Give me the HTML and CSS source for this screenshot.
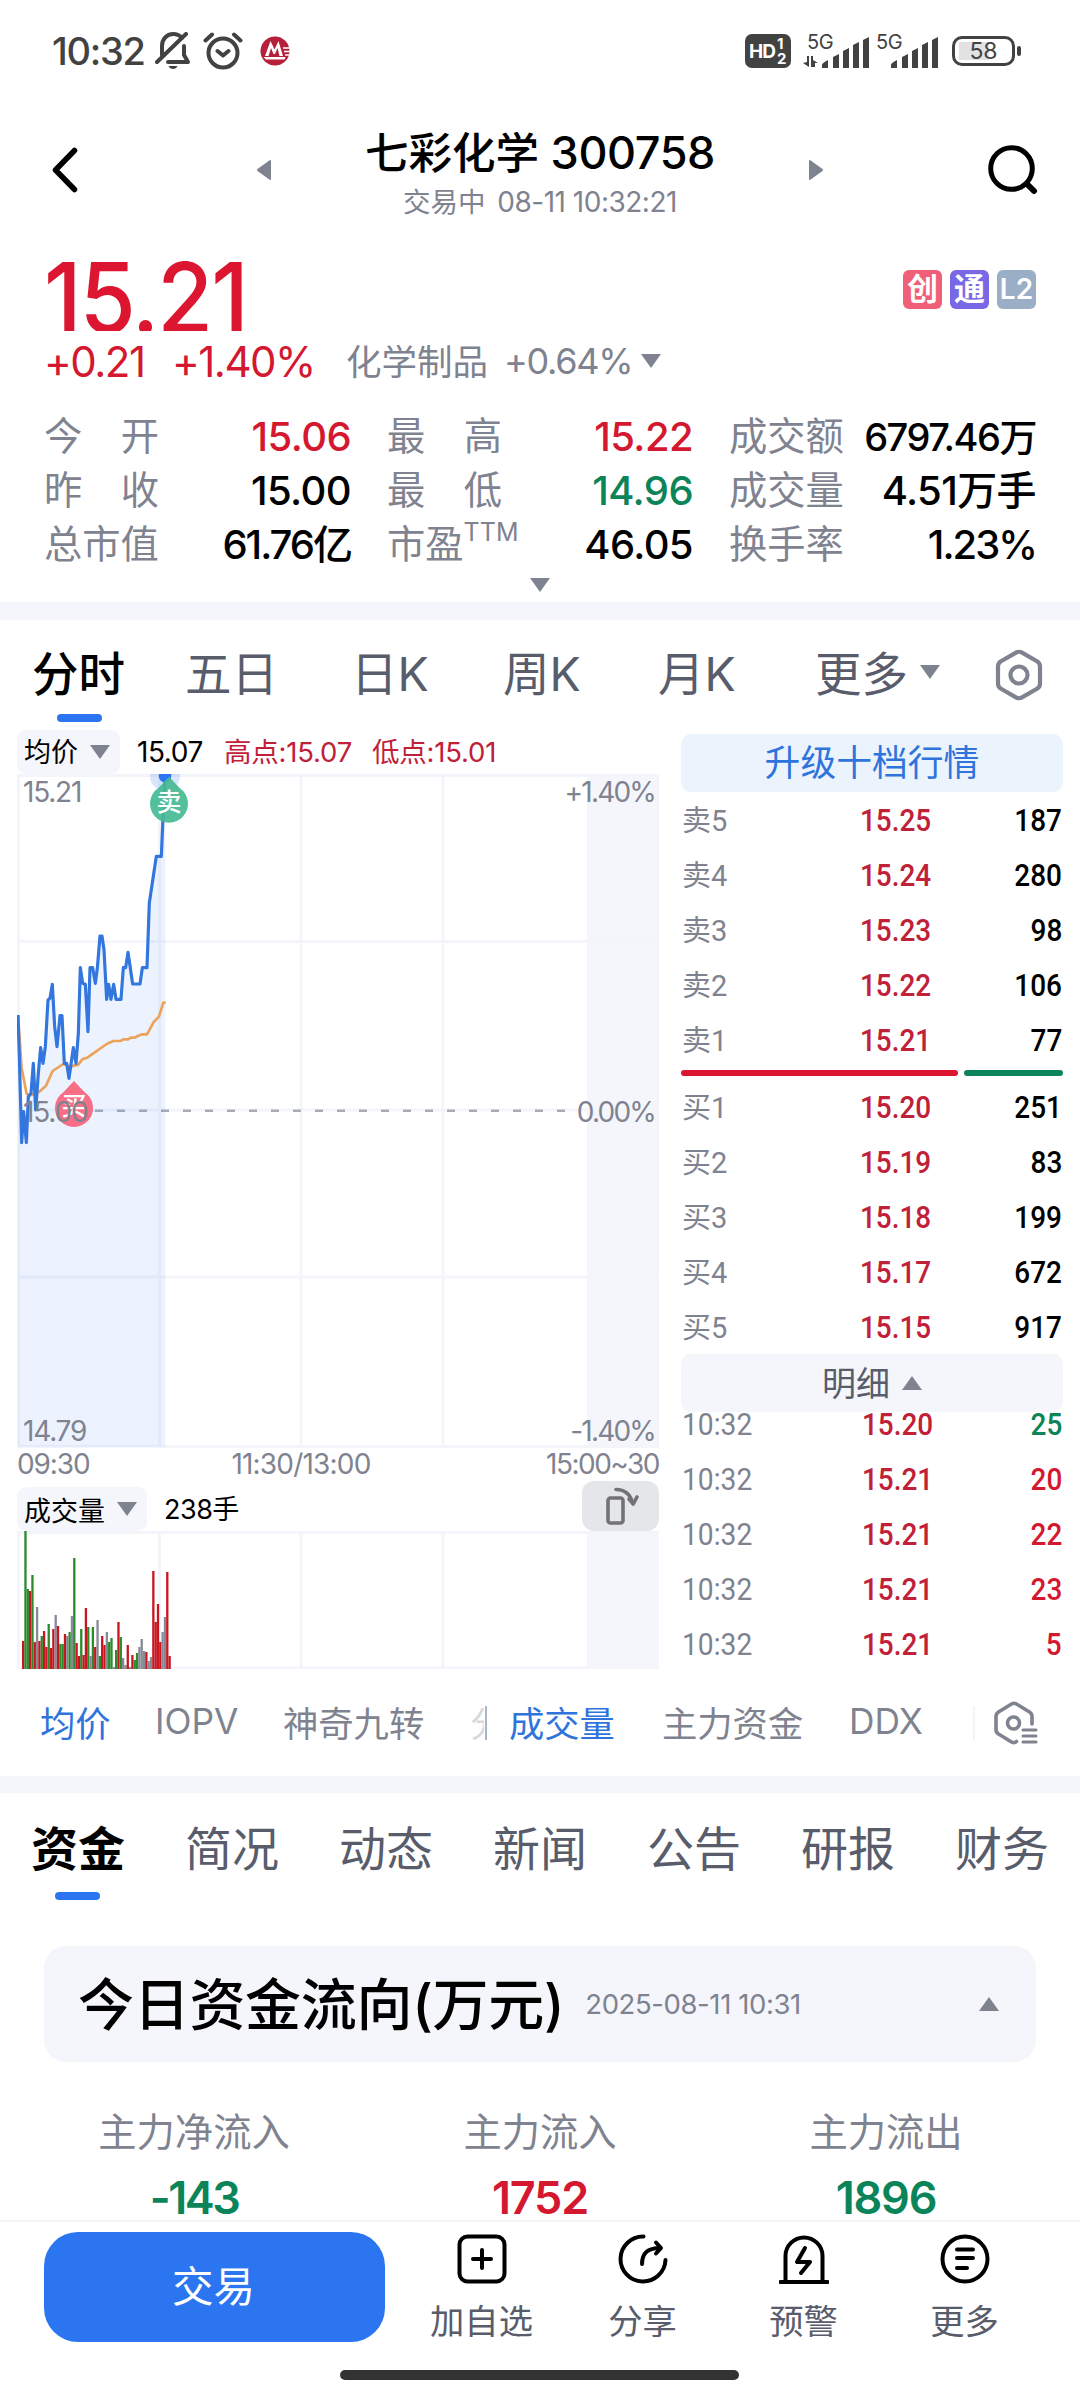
FILE: index.html
```html
<!DOCTYPE html>
<html lang="zh-CN">
<head>
<meta charset="utf-8">
<title>七彩化学 300758</title>
<link rel="stylesheet" href="styles.css">
</head>
<body>
<header class="status">
  <span class="clock">10:32</span>
  <svg class="bell" width="36" height="38" viewBox="0 0 36 38" fill="none" stroke="#424242" stroke-width="4" stroke-linecap="round" stroke-linejoin="round">
    <path d="M7 23V14C7 7 12 2 18 2c4 0 7 1.500 9 4M29 14v9l4 7H13"/><path d="M2 30L31 2"/><path d="M13.500 34h9c-1.500 4-7.500 4-9 0z" fill="#424242" stroke="none"/>
  </svg>
  <svg class="alarm" width="40" height="38" viewBox="0 0 40 38" fill="none" stroke="#424242" stroke-width="4" stroke-linecap="round" stroke-linejoin="round">
    <circle cx="20" cy="21" r="14.500"/><path d="M14.500 19l5.500 4.500 5.500-4.500M2.500 8.500L9 2.500M37.500 8.500L31 2.500"/>
  </svg>
  <svg class="bank" width="30" height="30" viewBox="0 0 30 30">
    <circle cx="15" cy="15" r="14.500" fill="#b5203a"/>
    <path d="M5 20L10.500 5l4 8.500L18.500 5l4.500 15h-3.500l-2-8-2.500 6h-1.500l-2.500-6-2.500 8z" fill="#fff"/><path d="M3.500 21h22l-1 2.500H6z" fill="#fff"/><path d="M23 12h7M24 15.500h6M25 19h5" stroke="#fff" stroke-width="1.300"/>
  </svg>
  <span class="hd"><b>HD</b><span class="hd-n"><i>1</i><i>2</i></span></span>
  <span class="net net-a"><em>5G</em>
    <svg width="66" height="32" viewBox="0 0 66 32" fill="#424242"><path d="M0 26l4-1v-6h2v11zM8 30V19l2 0v4l5 3h-3v4zM19 31v-3q0-2 6-5v8zM30 31V20l6-3v14zM40 31V14l6-3v20zM50 31V8l6-3v26zM60 31V3l6-3v31z"/></svg></span>
  <span class="net net-b"><em>5G</em>
    <svg width="48" height="32" viewBox="18 0 48 32" fill="#424242"><path d="M19 31v-3q0-2 6-5v8zM30 31V20l6-3v14zM40 31V14l6-3v20zM50 31V8l6-3v26zM60 31V3l6-3v31z"/></svg></span>
  <span class="battery"><span>58</span></span><span class="battery-tip"></span>
</header>

<nav class="titlebar">
  <svg class="back" width="26" height="46" viewBox="0 0 26 46" fill="none" stroke="#000" stroke-width="5.500" stroke-linecap="round" stroke-linejoin="round"><path d="M22.500 3.500L3.500 23l19 19.500"/></svg>
  <svg width="14" height="20" viewBox="0 0 14 20" fill="#7f8390"><path d="M13 0q1 0 1 1v18q0 1-1 1L.5 11q-1-1 0-2z"/></svg>
  <div class="name"><h1>七彩化学 <span>300758</span></h1><p>交易中 <span>08-11 10:32:21</span></p></div>
  <svg width="14" height="20" viewBox="0 0 14 20" fill="#7f8390"><path d="M1 0Q0 0 0 1v18q0 1 1 1l12.500-9q1-1 0-2z"/></svg>
  <svg class="search" width="50" height="50" viewBox="0 0 50 50" fill="none" stroke="#000" stroke-width="5" stroke-linecap="round"><circle cx="23.500" cy="23.500" r="20.800"/><path d="M39 39l7 7" stroke-width="6"/></svg>
</nav>

<section class="quote">
  <div class="price-row"><strong>15.21</strong><div class="badges"><b class="b1">创</b><b class="b2">通</b><b class="b3">L2</b></div></div>
  <div class="change"><span class="c1">+0.21</span><span class="c2">+1.40%</span><span class="c3">化学制品</span><span class="c4">+0.64%</span><i class="tri"></i></div>
  <dl class="stats">
    <dt class="sp"><span>今</span><span>开</span></dt><dd class="up">15.06</dd><dt class="sp"><span>最</span><span>高</span></dt><dd class="up">15.22</dd><dt>成交额</dt><dd class="long">6797.46万</dd>
    <dt class="sp"><span>昨</span><span>收</span></dt><dd>15.00</dd><dt class="sp"><span>最</span><span>低</span></dt><dd class="down">14.96</dd><dt>成交量</dt><dd>4.51万手</dd>
    <dt>总市值</dt><dd class="tight">61.76亿</dd><dt>市盈<sup>TTM</sup></dt><dd>46.05</dd><dt>换手率</dt><dd class="tight">1.23%</dd>
  </dl>
  <i class="tri expand"></i>
</section>

<nav class="periods">
  <span class="on">分时</span><span>五日</span><span>日K</span><span>周K</span><span>月K</span><span class="more">更多</span><i class="tri"></i>
  <svg width="48" height="52" viewBox="0 0 48 52" fill="none" stroke="#7f8390" stroke-width="4.200" stroke-linejoin="round"><path d="M21 3.600q3-1.700 6 0l15 8.600q3 1.800 3 5v17.600q0 3.200-3 5l-15 8.600q-3 1.700-6 0l-15-8.600q-3-1.800-3-5V17.200q0-3.200 3-5z"/><circle cx="24" cy="26" r="8.500"/></svg>
</nav>

<main class="market">
  <section class="charts">
    <div class="legend"><span class="chip">均价<i class="tri"></i></span><span class="avg">15.07</span><span class="hi">高点:15.07</span><span class="lo">低点:15.01</span></div>
    <div class="plot">
      <svg width="642" height="675" viewBox="0 0 642 675">
        <rect x="570" width="72" height="674" fill="#f4f6fb"/>
        <path d="M0 1.500h642M0 167.500h642M0 336h642M0 503h642M0 672.500h642M1.500 0v674M142.500 0v674M284 0v674M426 0v674M641 0v674" stroke="#f4f5fa" stroke-width="3" fill="none"/>
        <path d="M78 336.700H554" stroke="#a9acb6" stroke-width="2.600" stroke-dasharray="8 14"/>
        <g transform="translate(-17 -54) scale(.33333)" fill="none" stroke-linejoin="round">
          <path d="M54 885L58 1010 65 1268 71 1175 79 1268 85 1130 93 1120 100 1030 107 1170 115 1060 122 983 129 1030 136 980 144 840 150 835 157 793 164 920 171 980 180 887 186 887 193 1030 200 1030 207 1075 220 983 228 1030 235 940 241 743 248 790 256 793 264 935 270 743 278 743 286 790 292 745 300 648 306 648 312 690 320 838 326 793 333 838 341 793 348 838 363 838 370 743 377 743 384 697 398 792 420 792 427 743 441 743 448 548 469 409 484 409 490 270 496 170V2180H54z" fill="#2b76f0" fill-opacity=".09"/>
          <path d="M54 885L65 1045 80 1122 95 1125 118 1115 138 1097 158 1053 190 1032 210 1040 235 1034 248 1017 262 1013 320 972 340 963 362 963 370 958 384 958 392 953 405 953 413 948 427 943 441 943 462 905 477 890 490 848 497 848" stroke="#eba25b" stroke-width="8"/>
          <path d="M54 885L58 1010 65 1268 71 1175 79 1268 85 1130 93 1120 100 1030 107 1170 115 1060 122 983 129 1030 136 980 144 840 150 835 157 793 164 920 171 980 180 887 186 887 193 1030 200 1030 207 1075 220 983 228 1030 235 940 241 743 248 790 256 793 264 935 270 743 278 743 286 790 292 745 300 648 306 648 312 690 320 838 326 793 333 838 341 793 348 838 363 838 370 743 377 743 384 697 398 792 420 792 427 743 441 743 448 548 469 409 484 409 490 270 496 170" stroke="#3276de" stroke-width="9.500"/>
          <circle cx="495" cy="168" r="45" fill="#2b76f0" fill-opacity=".18"/><circle cx="495" cy="168" r="19" fill="#2b76f0"/>
          <path d="M507 170q8 8 32 34a57 57 0 1 1-64 0q24-26 32-34z" fill="#45ba93" fill-opacity=".92"/>
          <path d="M222 1083q8 8 32 34a57 57 0 1 1-64 0q24-26 32-34z" fill="#f8667f" fill-opacity=".95"/>
        </g>
        <text x="152" y="37" class="mark">卖</text><text x="57" y="341" class="mark">买</text>
      </svg>
      <div class="axis"><span>15.21</span><span>+1.40%</span><span>15.00</span><span>0.00%</span><span>14.79</span><span>-1.40%</span></div>
    </div>
    <div class="times"><span>09:30</span><span>11:30/13:00</span><span>15:00~30</span></div>
    <div class="vol-head"><span class="chip">成交量<i class="tri"></i></span><span class="vol">238手</span>
      <span class="rotate"><svg width="36" height="40" viewBox="0 0 36 40" fill="none" stroke="#737373" stroke-width="3.600" stroke-linejoin="round" stroke-linecap="round"><rect x="4" y="11" width="15" height="25" rx="2.500"/><path d="M12 2.500q13 0 17 14"/><path d="M25 12l4.300 5 3.700-7"/></svg></span></div>
    <svg class="volume" width="642" height="138" viewBox="0 0 642 138">
      <rect x="570" width="72" height="138" fill="#f4f6fb"/>
      <path d="M0 1.500h642M0 137h642M1.500 0v138M142.500 0v138M284 0v138M426 0v138" stroke="#f4f5fa" stroke-width="3"/>
      <g id="bars"></g>
    </svg>
  </section>
  <aside class="book">
    <div class="upgrade">升级十档行情</div>
    <ul class="rows">
      <li><span>卖5</span><b>15.25</b><em>187</em></li><li><span>卖4</span><b>15.24</b><em>280</em></li><li><span>卖3</span><b>15.23</b><em>98</em></li><li><span>卖2</span><b>15.22</b><em>106</em></li><li><span>卖1</span><b>15.21</b><em>77</em></li>
    </ul>
    <div class="ratio"><i></i><i></i></div>
    <ul class="rows">
      <li><span>买1</span><b>15.20</b><em>251</em></li><li><span>买2</span><b>15.19</b><em>83</em></li><li><span>买3</span><b>15.18</b><em>199</em></li><li><span>买4</span><b>15.17</b><em>672</em></li><li><span>买5</span><b>15.15</b><em>917</em></li>
    </ul>
    <div class="detail">明细<i class="tri upward"></i></div>
    <ul class="rows ticks">
      <li><span>10:32</span><b>15.20</b><em class="down">25</em></li><li><span>10:32</span><b>15.21</b><em class="up">20</em></li><li><span>10:32</span><b>15.21</b><em class="up">22</em></li><li><span>10:32</span><b>15.21</b><em class="up">23</em></li><li><span>10:32</span><b>15.21</b><em class="up">5</em></li>
    </ul>
  </aside>
</main>

<nav class="indicators">
  <span class="i1 sel">均价</span><span class="i2">IOPV</span><span class="i3">神奇九转</span><span class="cut">分</span><i class="bar"></i><span class="i4 sel">成交量</span><span class="i5">主力资金</span><span class="i6">DDX</span><i class="bar faint"></i>
  <svg width="46" height="44" viewBox="0 0 46 44" fill="none" stroke="#7f8390" stroke-width="3.600" stroke-linecap="round" stroke-linejoin="round"><path d="M39 23V15.500q0-3-2.500-4.500L23.500 3q-2.500-1.500-5 0L5.500 11Q3 12.500 3 15.500v13q0 3 2.500 4.500l13 8q3 1.500 5-.5"/><circle cx="20.500" cy="22" r="6"/><path d="M30 29h13M30 35h13M30 41h13" stroke-width="3"/></svg>
</nav>

<nav class="sections"><span class="on">资金</span><span>简况</span><span>动态</span><span>新闻</span><span>公告</span><span>研报</span><span>财务</span></nav>

<section class="flow">
  <div class="flow-head"><h2>今日资金流向(万元)</h2><time>2025-08-11 10:31</time><i class="tri upward"></i></div>
  <div class="flow-cols">
    <div><p>主力净流入</p><strong class="down net-flow">-143</strong></div><div><p>主力流入</p><strong class="up">1752</strong></div><div><p>主力流出</p><strong class="down">1896</strong></div>
  </div>
</section>

<footer class="actions">
  <button class="trade">交易</button>
  <div class="act"><svg viewBox="0 0 50 50"><rect x="2.500" y="2.500" width="45" height="45" rx="8"/><path d="M25 16v18M16 25h18"/></svg>加自选</div>
  <div class="act"><svg viewBox="0 0 50 50"><path d="M25.500 2.500A22.500 22.500 0 1 0 47.500 26"/><path d="M24 30C24 18 31 14 42 14M38 8.500l5 5.500-5 5.500"/></svg>分享</div>
  <div class="act"><svg viewBox="0 0 50 50"><path d="M6.500 47V22a18.500 18.500 0 0 1 37 0v25M1.500 48h47"/><path d="M26 14l-8 14h13l-9 11" /></svg>预警</div>
  <div class="act"><svg viewBox="0 0 50 50"><circle cx="25" cy="25" r="22.500"/><path d="M17 15.500h16M17 24h16M17 34h10"/></svg>更多</div>
</footer>
<div class="home"></div>
<script src="volume.js"></script>
</body>
</html>
```
FILE: volume.js
```js
// Minute volume: r = rising, g = falling, n = flat, followed by bar height in px
var minutes = ("r28 g138 g80 r78 g94 r27 n62 r28 g33 r38 r22 g45 r21 r40 n54 r43 g25 g25 r35 n33 g37 n53 g111 r26 r13 g40 r14 r61 g42 n13 g42 r22 n49 g13 r33 r24 n37 g27 g31 n2 g19 r47 g32 n11 n4 r24 n2 r14 g9 g16 n22 n30 n18 r17 n8 n12 r98 r47 r65 r27 n37 n52 r97 r13").split(" ");
var colors = { r: "#c8151f", g: "#2a8a2c", n: "#868a96" };
var group = document.getElementById("bars");
minutes.forEach(function (m, i) {
  var bar = document.createElementNS("http://www.w3.org/2000/svg", "rect");
  var h = +m.slice(1);
  bar.setAttribute("x", 5 + i * 2.325);
  bar.setAttribute("y", 138 - h);
  bar.setAttribute("width", 2.3);
  bar.setAttribute("height", h);
  bar.setAttribute("fill", colors[m[0]]);
  group.appendChild(bar);
});
```
FILE: styles.css
```css
* { box-sizing: border-box; margin: 0; padding: 0; }
body { width: 1080px; height: 2400px; overflow: hidden; background: #fff; color: #000; font-family: Inter, "Noto Sans CJK SC", sans-serif; display: flex; flex-direction: column; white-space: nowrap; }
body > * { flex-shrink: 0; }
i, em { font-style: normal; }
ul { list-style: none; }
svg { display: block; flex-shrink: 0; }
.up { color: #d3182f; }
.down { color: #0c8459; }
.tri { display: block; flex-shrink: 0; width: 20px; height: 14px; background: #7f8390; clip-path: polygon(0 0, 100% 0, 50% 100%); }
.tri.upward { clip-path: polygon(50% 0, 100% 100%, 0 100%); }

.status { height: 102px; display: flex; align-items: center; color: #424242; padding-left: 52px; }
.clock { width: 103px; font-size: 38px; font-weight: 500; letter-spacing: -1.3px; }
.alarm { margin-left: 12px; }
.bank { margin-left: 17px; margin-right: 455px; }
.hd { width: 46px; height: 34px; border-radius: 7px; background: #424242; color: #fff; display: flex; align-items: center; padding-left: 4px; font-size: 19px; letter-spacing: -1px; }
.hd-n { display: flex; flex-direction: column; font-size: 15px; font-weight: 700; line-height: 15px; margin-left: 2px; }
.net { display: grid; height: 35px; align-items: end; margin-left: 12px; }
.net em { grid-area: 1/1; align-self: start; font-size: 20px; line-height: 16px; margin-left: 4px; letter-spacing: -.5px; }
.net svg { grid-area: 1/1; }
.net-b { margin-left: 7px; }
.net-b em { margin-left: 0; }
.net-b svg { margin-left: 14px; }
.battery { width: 63px; height: 30px; margin-left: 14px; border: 3px solid #424242; border-radius: 10px; padding: 3px; font-size: 23px; line-height: 18px; text-align: center; background: linear-gradient(#e2e2e2, #e2e2e2) 4px 3px / 30px 18px no-repeat; }
.battery-tip { width: 4px; height: 10px; margin-left: 2px; border-radius: 2px; background: #424242; }

.titlebar { height: 128px; display: flex; align-items: center; padding: 8px 42px 0 52px; }
.titlebar .back { margin-right: 179px; }
.name { width: 539px; text-align: center; padding-top: 13px; }
.name h1 { font-size: 43.500px; font-weight: 500; line-height: 50px; }
.name h1 span { font-size: 45px; letter-spacing: -.4px; }
.name p { font-size: 27.500px; line-height: 48px; color: #7f8390; }
.name p span { margin-left: 4px; font-size: 28px; letter-spacing: -.5px; }
.search { margin-left: 165px; }

.quote { height: 390px; padding: 26px 44px 0; border-bottom: 18px solid #f4f6fb; display: flex; flex-direction: column; }
.price-row { height: 75px; overflow: hidden; display: flex; justify-content: space-between; }
.price-row strong { font-size: 98px; font-weight: 500; line-height: 84px; letter-spacing: -2px; color: #dc1530; transform: scaleX(.925); transform-origin: left; }
.badges { display: flex; gap: 8px; padding-top: 14px; }
.badges b { width: 39px; height: 39px; border-radius: 6px; color: #fff; font-size: 31px; line-height: 38px; font-weight: 600; text-align: center; }
.b1 { background: #f05f78; }
.b2 { background: #7868e6; }
.badges .b3 { background: #9aaec6; font-size: 28px; }
.change { height: 60px; display: flex; align-items: center; font-size: 42px; color: #d3182f; letter-spacing: -1.500px; }
.c1 { width: 128px; }
.c2 { width: 174px; }
.c3 { width: 158px; font-size: 35.500px; letter-spacing: 0; color: #7f8390; margin-bottom: 4px; }
.c4 { width: 137px; font-size: 36px; color: #7f8390; letter-spacing: -1.300px; }
.stats { display: grid; grid-template-columns: 115px 192px 151px 191px 151px 192px; grid-auto-rows: 54px; height: 162px; margin-top: 18px; }
.stats dt { font-size: 38.300px; line-height: 54px; color: #7f8390; padding-left: 36px; }
.stats dt:nth-of-type(3n + 1) { padding-left: 0; }
.stats dd { font-size: 40px; line-height: 56px; font-weight: 500; text-align: right; letter-spacing: -.6px; }
.stats .long { font-size: 38px; letter-spacing: -1.500px; }
.stats .tight { letter-spacing: -2px; }
.stats .sp { display: flex; justify-content: space-between; }
.stats sup { font-size: 25px; line-height: 0; vertical-align: 17px; }
.expand { margin: 7px auto 0; }

.periods { height: 110px; display: flex; color: #585c6b; font-size: 46.500px; line-height: 108px; padding-left: 32px; }
.periods .on { position: relative; color: #000; font-weight: 500; }
.periods .tri { margin: 45px 55px 0 12px; }
.periods svg { margin-top: 29px; }
.periods span { width: 166px; }
.periods span.on { width: 153px; }
.periods span:nth-child(3) { width: 152px; }
.periods span:nth-child(4) { width: 155px; }
.periods span:nth-child(5) { width: 157px; }
.periods span.more { width: 93px; }
.on::after { content: ""; position: absolute; left: 25px; bottom: 8px; width: 45px; height: 8px; border-radius: 4px; background: #2b76f0; }

.market { height: 939px; display: flex; padding-left: 17px; gap: 22px; }
.charts { width: 642px; }
.legend { height: 44px; display: flex; line-height: 45px; font-size: 28px; letter-spacing: -.4px; }
.chip { display: flex; align-items: center; height: 44px; padding: 0 10px 0 7px; gap: 12px; border-radius: 9px; background: #f4f6fb; font-size: 27px; letter-spacing: 0; }
.avg { margin-left: 17px; width: 87px; }
.hi, .lo { color: #c02038; font-size: 27.500px; letter-spacing: -.2px; }
.hi { width: 148px; }
.plot { display: grid; height: 674px; }
.plot > * { grid-area: 1/1; }
.mark { font-size: 25px; fill: #fff; text-anchor: middle; font-weight: 500; }
.axis { display: grid; grid-template-columns: 1fr 1fr; align-content: space-between; color: #7f8390; font-size: 28px; letter-spacing: -1.200px; line-height: 34px; padding: 1px 4px 0 6px; z-index: 1; height: 674px; }
.axis span:nth-child(even) { text-align: right; letter-spacing: -1.800px; }
.times { height: 33px; display: grid; grid-template-columns: 142px 284px 1fr; color: #7f8390; font-size: 28px; line-height: 32px; letter-spacing: -1.100px; }
.times span:nth-child(2) { text-align: center; letter-spacing: -.8px; }
.times span:nth-child(3) { text-align: right; letter-spacing: -1.500px; }
.vol-head { height: 50px; display: flex; align-items: flex-end; }
.vol { margin-left: 17px; font-size: 27px; line-height: 43px; letter-spacing: -.5px; }
.rotate { margin-left: auto; width: 77px; height: 50px; border-radius: 12px; background: #e4e6ea; padding: 6px 0 0 22px; }
.book { width: 382px; padding-top: 4px; }
.upgrade { height: 58px; border-radius: 10px; background: #ebf3fd; color: #2f74dc; font-size: 35.800px; line-height: 58px; text-align: center; }
.rows li { height: 55px; display: grid; grid-template-columns: 178px 1fr auto; line-height: 58px; font-size: 31px; font-family: Roboto, "Noto Sans CJK SC", sans-serif; padding: 0 1px 0 1px; }
.rows span { font-size: 29px; color: #7f8390; }
.rows b { color: #c02038; font-weight: 500; transform: scaleX(.9); transform-origin: left; }
.rows em { font-weight: 500; transform: scaleX(.9); transform-origin: right; }
.ratio { height: 12px; display: flex; gap: 6px; padding-top: 3px; }
.ratio i { width: 277px; height: 6px; border-radius: 3px; background: #dc1530; }
.ratio i + i { width: 99px; background: #0c8459; }
.detail { height: 58px; display: flex; align-items: center; justify-content: center; gap: 12px; padding-bottom: 3px; border-radius: 10px; background: #f4f6fb; color: #585c6b; font-size: 34px; }
.detail .tri { margin-top: 3px; }
.ticks { margin-top: -16px; }
.ticks span { font-size: 31px; transform: scaleX(.91); transform-origin: left; }
.ticks b { margin-left: 2px; }

.indicators { height: 124px; border-bottom: 17px solid #f4f6fb; display: flex; align-items: center; color: #7f8390; font-size: 35.300px; }
.indicators span { margin-bottom: 3px; }
.indicators .sel { color: #2f74dc; }
.i1 { margin-left: 40px; width: 115px; }
.i2 { width: 128px; }
.i3 { width: 187px; }
.cut { width: 14px; overflow: hidden; opacity: .3; }
.bar { width: 2px; height: 34px; margin-left: 1px; background: #a9b4c8; }
.bar.faint { opacity: .15; margin-right: 18px; }
.i4 { margin-left: 22px; width: 153px; }
.i5 { width: 187px; }
.i6 { width: 123px; }
.sections { height: 153px; display: flex; padding: 18px 0 0 31px; color: #585c6b; font-size: 47px; line-height: 76px; }
.sections span { width: 154px; flex-shrink: 0; }
.sections .on { position: relative; height: 97px; color: #000; font-weight: 700; }
.sections .on::after { bottom: 8px; left: 24px; }

.flow { height: 274px; overflow: hidden; }
.flow-head { margin: 0 44px; height: 116px; border-radius: 22px; background: #f4f6fb; display: flex; align-items: center; padding: 0 37px 0 34px; }
.flow-head h2 { font-size: 56px; font-weight: 500; letter-spacing: -.3px; margin-bottom: 8px; }
.flow-head time { margin-left: 21px; font-size: 27.500px; color: #7f8390; letter-spacing: -.4px; }
.flow-head .tri { margin-left: auto; }
.flow-cols { display: grid; grid-template-columns: 346px 346px 346px; padding: 43px 0 0 21px; text-align: center; }
.flow-cols p { font-size: 38.300px; line-height: 54px; color: #7f8390; }
.flow-cols strong { display: block; font-size: 45px; font-weight: 600; line-height: 54px; margin-top: 12px; letter-spacing: -1.200px; }
.flow-cols .net-flow { letter-spacing: -2.500px; }

.actions { height: 126px; border-top: 2px solid #f3f4f6; display: flex; padding: 10px 0 0 44px; }
.trade { width: 341px; height: 110px; margin-right: 16px; padding-right: 2px; border: 0; border-radius: 34px; background: #2b76f0; color: #fff; font: 41.500px/108px Inter, "Noto Sans CJK SC", sans-serif; }
.act { width: 161px; display: flex; flex-direction: column; align-items: center; font-size: 34.300px; line-height: 50px; color: #585c6b; padding-top: 2px; }
.act svg { width: 50px; height: 50px; margin-bottom: 13px; fill: none; stroke: #000; stroke-width: 4; stroke-linecap: round; stroke-linejoin: round; }
.home { width: 399px; height: 10px; margin: 24px 0 0 340px; border-radius: 5px; background: #333; }
```
